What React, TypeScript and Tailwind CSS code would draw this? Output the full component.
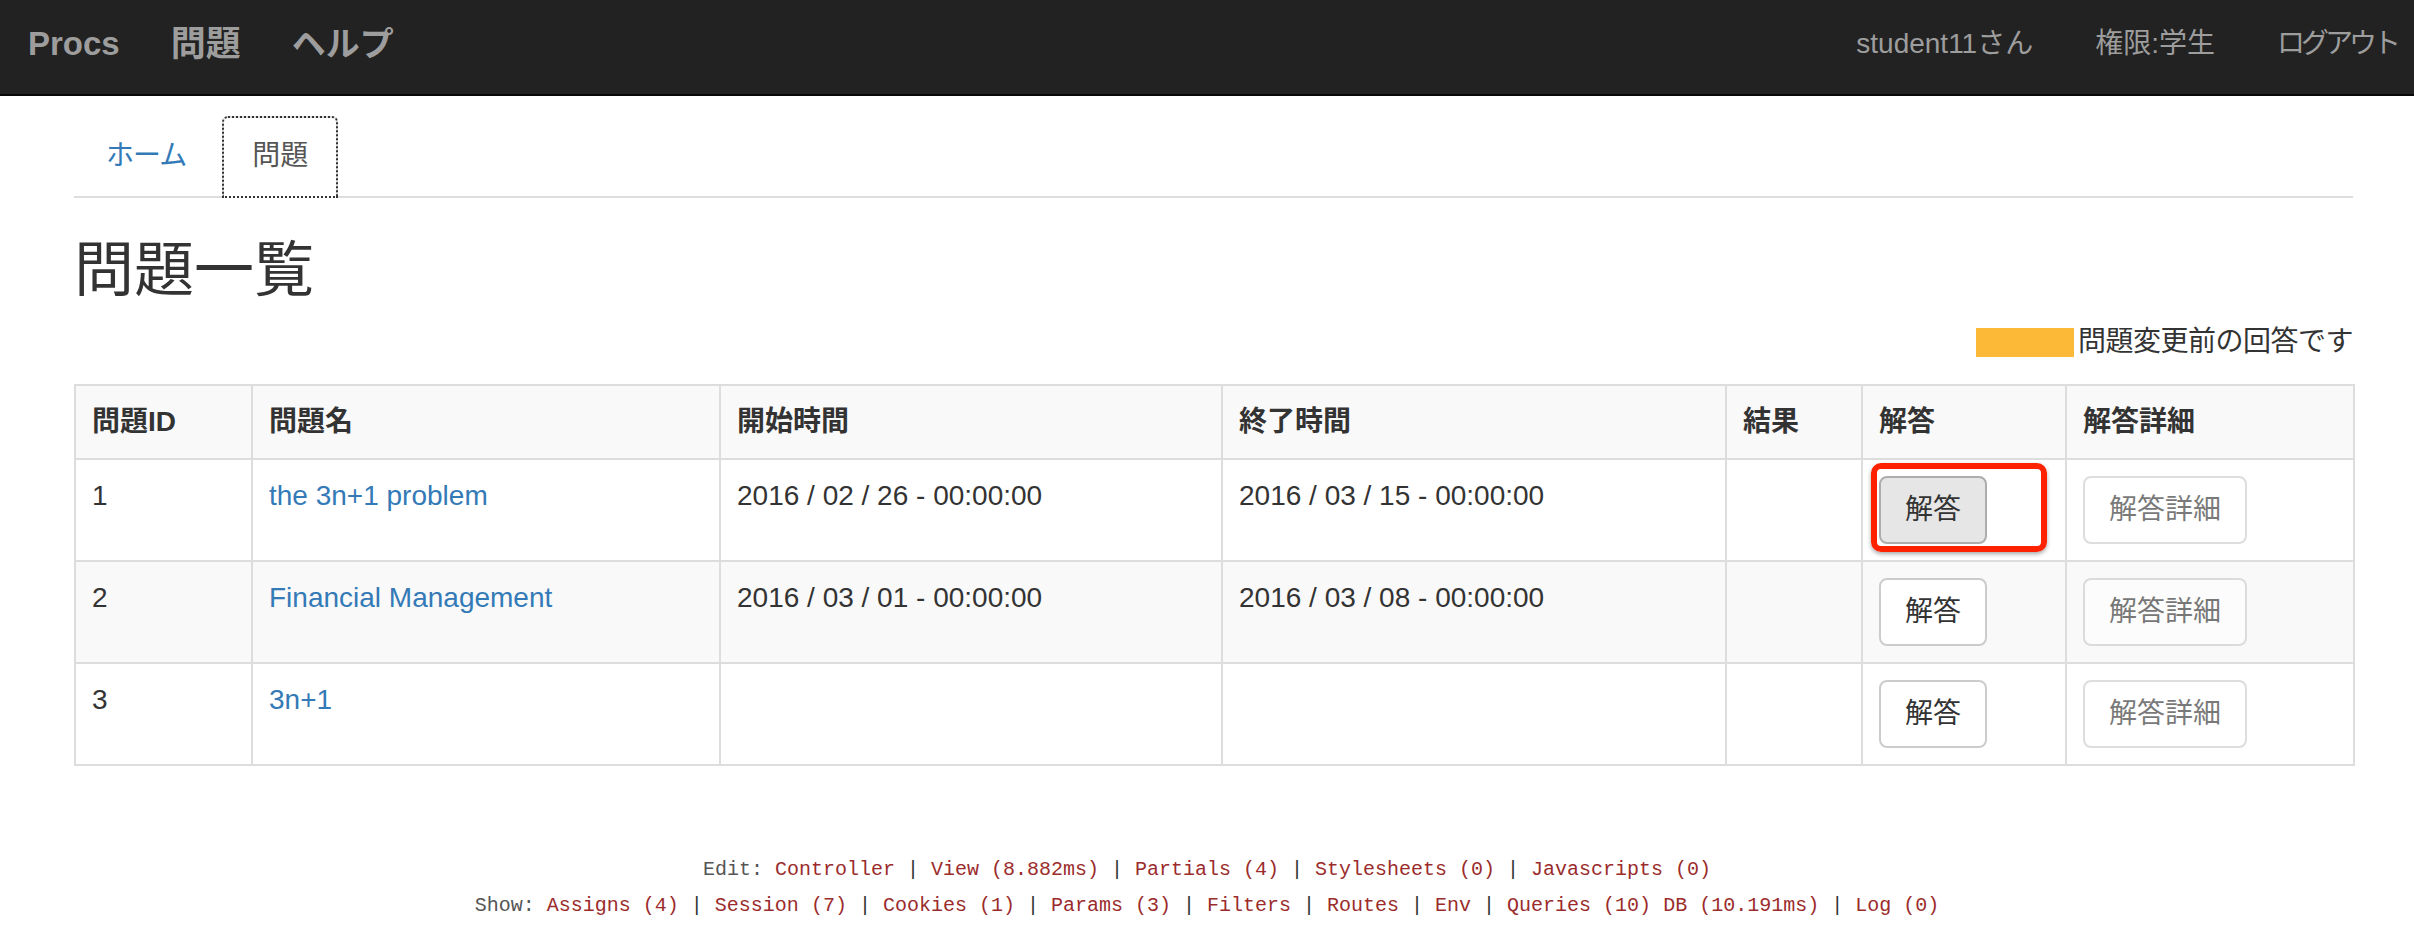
const sans = { fontFamily: '"Liberation Sans", "Noto Sans CJK JP", sans-serif' };

type Row = {
  id: number;
  name: string;
  start: string;
  end: string;
  focused?: boolean;
};

const rows: Row[] = [
  { id: 1, name: "the 3n+1 problem", start: "2016 / 02 / 26 - 00:00:00", end: "2016 / 03 / 15 - 00:00:00", focused: true },
  { id: 2, name: "Financial Management", start: "2016 / 03 / 01 - 00:00:00", end: "2016 / 03 / 08 - 00:00:00" },
  { id: 3, name: "3n+1", start: "", end: "" },
];

const cell = "border-2 border-[#ddd] p-[16px] align-top text-left leading-[40px]";

function Navbar() {
  return (
    <div className="h-[96px] bg-[#222] border-b-2 border-[#080808] flex items-start pt-[24px] text-[#9d9d9d]">
      <div className="flex items-center h-[40px] pl-[28px] font-bold">
        <span className="text-[33px] leading-[40px]">Procs</span>
        <span className="text-[35px] leading-[40px] ml-[51px]">問題</span>
        <span className="text-[34px] leading-[40px] ml-[51px]">ヘルプ</span>
      </div>
      <div className="ml-auto flex items-center h-[40px] text-[28px] pr-[17px]">
        <span>student11さん</span>
        <span className="ml-[62px]">権限:学生</span>
        <span className="ml-[62px] tracking-[-4px]">ログアウト</span>
      </div>
    </div>
  );
}

function Tabs() {
  return (
    <div className="flex border-b-2 border-[#ddd] mt-[20px] text-[28px] leading-[40px]">
      <a className="px-[30px] py-[18px] mr-[4px] border-2 border-transparent text-[#337ab7] tracking-[-1px]">ホーム</a>
      <a className="relative px-[28px] py-[18px] -mb-[2px] border-2 border-[#ddd] border-b-white bg-white rounded-t-[6px] text-[#555] outline-2 outline-dotted outline-[#333] -outline-offset-2">
        問題
      </a>
    </div>
  );
}

function Footnotes() {
  const sep = <span className="text-[#333]"> | </span>;
  const l = (t: string) => <span className="text-[#9b2c2c]">{t}</span>;
  return (
    <div
      className="text-center text-[20px] leading-[36px] mt-[86px]"
      style={{ fontFamily: '"Liberation Mono", monospace' }}
    >
      <div className="whitespace-pre">
        <span className="text-[#555]">Edit: </span>
        {l("Controller")}{sep}{l("View (8.882ms)")}{sep}{l("Partials (4)")}{sep}
        {l("Stylesheets (0)")}{sep}{l("Javascripts (0)")}
      </div>
      <div className="whitespace-pre">
        <span className="text-[#555]">Show: </span>
        {l("Assigns (4)")}{sep}{l("Session (7)")}{sep}{l("Cookies (1)")}{sep}{l("Params (3)")}{sep}
        {l("Filters")}{sep}{l("Routes")}{sep}{l("Env")}{sep}{l("Queries (10)")} {l("DB (10.191ms)")}{sep}
        {l("Log (0)")}
      </div>
    </div>
  );
}

export default function App() {
  return (
    <div className="min-h-screen bg-white text-[#333]" style={sans}>
      <Navbar />
      <div className="pl-[74px] pr-[61px]">
        <Tabs />
        <h2 className="text-[60px] leading-[66px] mt-[40px]">問題一覧</h2>
        <div className="flex justify-end items-center mt-[18px] text-[28px] leading-[40px]">
          <span className="w-[98px] h-[29px] bg-[#fcb937] mr-[4px]" />
          <span className="tracking-[-0.5px]">問題変更前の回答です</span>
        </div>
        <table className="table-fixed border-collapse w-[2279px] mt-[22px] text-[28px]">
          <colgroup>
            <col className="w-[177px]" />
            <col className="w-[468px]" />
            <col className="w-[502px]" />
            <col className="w-[504px]" />
            <col className="w-[136px]" />
            <col className="w-[204px]" />
            <col className="w-[288px]" />
          </colgroup>
          <thead>
            <tr className="bg-[#f9f9f9]">
              {["問題ID", "問題名", "開始時間", "終了時間", "結果", "解答", "解答詳細"].map((h) => (
                <th key={h} className={`${cell} font-bold`}>
                  {h}
                </th>
              ))}
            </tr>
          </thead>
          <tbody>
            {rows.map((r, i) => (
              <tr key={r.id} className={i % 2 === 1 ? "bg-[#f9f9f9]" : "bg-white"}>
                <td className={cell}>{r.id}</td>
                <td className={cell}>
                  <a className="text-[#337ab7]">{r.name}</a>
                </td>
                <td className={cell}>{r.start}</td>
                <td className={cell}>{r.end}</td>
                <td className={cell}></td>
                <td className={cell}>
                  <div className="relative w-fit">
                    <button
                      className={`px-[24px] py-[12px] border-2 rounded-[8px] leading-[40px] text-[#333] ${
                        r.focused ? "bg-[#e6e6e6] border-[#adadad]" : "bg-white border-[#ccc]"
                      }`}
                    >
                      解答
                    </button>
                    {r.focused && (
                      <div className="absolute left-[-8px] top-[-13px] w-[176px] h-[89px] border-[6px] border-[#ff2200] rounded-[10px] shadow-[0_2px_4px_rgba(0,0,0,0.35)] pointer-events-none" />
                    )}
                  </div>
                </td>
                <td className={cell}>
                  <button className="px-[24px] py-[12px] border-2 border-[#ccc] rounded-[8px] leading-[40px] text-[#333] bg-white opacity-65">
                    解答詳細
                  </button>
                </td>
              </tr>
            ))}
          </tbody>
        </table>
      </div>
      <Footnotes />
    </div>
  );
}
